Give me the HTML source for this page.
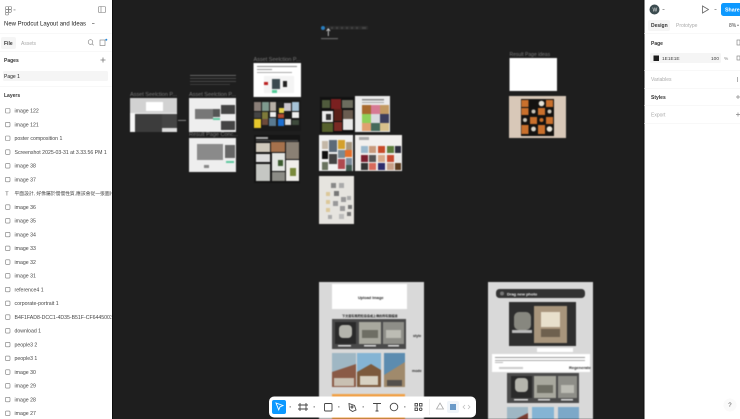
<!DOCTYPE html>
<html><head><meta charset="utf-8">
<style>
html,body{margin:0;padding:0;background:#1e1e1e;width:740px;height:419px;overflow:hidden}
svg{display:block;position:absolute;left:0;top:0}
text{font-family:"Liberation Sans","Noto Sans CJK SC",sans-serif;font-size:5.2px;fill:#333}
.l{fill:#777;font-size:5.500px}
.ic{fill:none;stroke:#777;stroke-width:.6}
.tb{fill:none;stroke:#444;stroke-width:.9}
.cv{filter:blur(.55px)}
.ui{filter:blur(.25px)}
</style></head><body>
<svg width="740" height="419" viewBox="0 0 740 419" xmlns="http://www.w3.org/2000/svg">
<defs><clipPath id="lp"><rect x="0" y="0" width="111.500" height="419"/></clipPath></defs>
<rect width="740" height="419" fill="#1e1e1e"/>

<g class="cv">
<!-- col 1 -->
<text x="130" y="96" class="l">Asset Seelction P...</text>
<rect x="130" y="98" width="47" height="34" fill="#eee"/>
<rect x="130" y="98" width="47" height="15" fill="#d2d2d2"/>
<rect x="146" y="102" width="17" height="9" fill="#fff"/>
<rect x="135" y="114" width="27" height="18" fill="#3c3c3c"/>
<rect x="162" y="114" width="15" height="14" fill="#444"/>
<rect x="130" y="113" width="5" height="19" fill="#f6f6f6"/>
<rect x="162" y="128" width="15" height="4" fill="#ddd"/>

<!-- col 2 -->
<rect x="190" y="75" width="46" height=".8" fill="#777"/>
<rect x="190" y="78" width="46" height=".8" fill="#555"/>
<rect x="190" y="81" width="46" height=".8" fill="#555"/>
<rect x="190" y="84" width="40" height=".8" fill="#444"/>
<text x="189" y="96" class="l">Asset Seelction P...</text>
<rect x="189" y="98" width="47" height="34" fill="#eee"/>
<rect x="195" y="109" width="18" height="10" fill="#777"/>
<rect x="213" y="109" width="7" height="8" fill="#555"/>
<rect x="221" y="105" width="14" height="9" fill="#444"/>
<rect x="221" y="121" width="14" height="9" fill="#444"/>
<rect x="213" y="118" width="7" height="2" fill="#5fc9a0"/>
<rect x="178" y="120" width="8" height=".8" fill="#999"/>
<text x="189" y="136" class="l">Result Page Conc...</text>
<rect x="189" y="138" width="47" height="34" fill="#eee"/>
<rect x="197" y="144" width="26" height="16" fill="#8a8a8a"/>
<rect x="225" y="145" width="10" height="13" fill="#666"/>
<rect x="226" y="161" width="8" height="2" fill="#5fc9a0"/>
<rect x="204" y="165" width="5" height="3" fill="#888"/>

<!-- col 3 -->
<text x="253.500" y="61" class="l">Asset Seelction P...</text>
<rect x="253.500" y="63" width="47.500" height="34" fill="#fff"/>
<rect x="257" y="66" width="40" height="1" fill="#888"/>
<rect x="257" y="69" width="15" height="1" fill="#999"/>
<rect x="257" y="72" width="35" height="1" fill="#aaa"/>
<rect x="264" y="76" width="30" height="17" fill="#f4f4f4"/>
<rect x="272" y="79" width="8" height="10" fill="#3c4a50"/>
<rect x="264" y="82" width="4" height="3" fill="#b22"/>
<rect x="283" y="81" width="4" height="6" fill="#222"/>
<rect x="272" y="90" width="5" height="3" fill="#5c9"/>
<!-- collage dark -->
<rect x="253" y="100" width="48" height="31" fill="#1a1a1a"/>
<rect x="254" y="102" width="7" height="9" fill="#8a7f78"/>
<rect x="262" y="102" width="7" height="9" fill="#7e9a8e"/>
<rect x="270" y="102" width="6" height="9" fill="#b8b0a6"/>
<rect x="277" y="102" width="6" height="9" fill="#222"/>
<rect x="284" y="103" width="7" height="8" fill="#c9c4cc"/>
<rect x="292" y="102" width="7" height="9" fill="#a6c3d8"/>
<rect x="279" y="108" width="5" height="5" fill="#e6d24a"/>
<rect x="254" y="112" width="7" height="6" fill="#444"/>
<rect x="262" y="112" width="6" height="7" fill="#7d7a3a"/>
<rect x="270" y="112" width="6" height="5" fill="#eee"/>
<rect x="278" y="114" width="6" height="4" fill="#b34a2f"/>
<rect x="292" y="112" width="7" height="6" fill="#eee"/>
<rect x="254" y="119" width="7" height="9" fill="#e6c72c"/>
<rect x="262" y="119" width="6" height="6" fill="#6d4a3a"/>
<rect x="269" y="118" width="7" height="8" fill="#5a7a90"/>
<rect x="278" y="119" width="6" height="7" fill="#1d6fd0"/>
<rect x="285" y="119" width="6" height="6" fill="#ddd"/>
<rect x="292" y="120" width="7" height="5" fill="#3e4a3c"/>
<!-- collage 3 -->
<rect x="254" y="135" width="46" height="48" fill="#151515"/>
<rect x="256" y="137" width="12" height="2" fill="#aaa"/>
<rect x="256" y="140" width="42" height="1.500" fill="#444"/>
<rect x="256" y="143" width="14" height="9" fill="#cfc8bb"/>
<rect x="271" y="142" width="14" height="10" fill="#a5714c"/>
<rect x="286" y="142" width="13" height="17" fill="#8a8074"/>
<rect x="256" y="154" width="14" height="8" fill="#ddd"/>
<rect x="272" y="153" width="13" height="18" fill="#e4e6e2"/>
<rect x="278" y="160" width="5" height="6" fill="#3c5c30"/>
<rect x="256" y="164" width="14" height="17" fill="#c5c7c3"/>
<rect x="272" y="172" width="13" height="9" fill="#8c8c86"/>
<rect x="286" y="160" width="13" height="21" fill="#f0eeea"/>
<rect x="290" y="168" width="6" height="8" fill="#7a8a3c"/>

<!-- top small -->
<rect x="321" y="26" width="4" height="4" rx="2" fill="#2a7fc0"/>
<rect x="326" y="26" width="42" height="3.500" fill="#2c2c2c"/>
<rect x="331" y="27" width="2" height="2" fill="#444"/><rect x="336" y="27" width="2" height="2" fill="#444"/><rect x="341" y="27" width="2" height="2" fill="#444"/><rect x="346" y="27" width="2" height="2" fill="#444"/><rect x="351" y="27" width="2" height="2" fill="#444"/><rect x="356" y="27" width="2" height="2" fill="#444"/><rect x="362" y="27" width="4" height="2" fill="#444"/>
<path d="M328.300 36V29M326.500 31l1.800-2.200 1.800 2.200" fill="none" stroke="#ddd" stroke-width=".8"/>
<rect x="321" y="38" width="17" height="1.200" fill="#666"/>

<!-- center collages -->
<rect x="320" y="97" width="34" height="36" fill="#111"/>
<rect x="322" y="100" width="8" height="8" fill="#4f5a3c"/>
<rect x="331" y="99" width="10" height="10" fill="#7a2020"/>
<rect x="342" y="100" width="11" height="8" fill="#6c6c5e"/>
<rect x="322" y="111" width="11" height="11" fill="#ececec"/>
<rect x="326" y="114" width="5" height="6" fill="#333"/>
<rect x="334" y="109" width="8" height="12" fill="#5a2018"/>
<rect x="343" y="110" width="10" height="9" fill="#6a5c50"/>
<rect x="343" y="119" width="10" height="11" fill="#e8e8e8"/>
<rect x="322" y="123" width="11" height="9" fill="#55602c"/>
<rect x="334" y="122" width="8" height="9" fill="#7a2a24"/>

<rect x="355" y="96" width="35" height="36" fill="#ececec"/>
<rect x="362" y="99" width="22" height="1.500" fill="#888"/>
<rect x="362" y="102" width="22" height="1" fill="#aaa"/>
<rect x="362" y="105" width="9" height="9" fill="#a8692e"/>
<rect x="371" y="105" width="9" height="9" fill="#d77a94"/>
<rect x="380" y="105" width="9" height="9" fill="#c39a62"/>
<rect x="362" y="114" width="9" height="9" fill="#8fcf5a"/>
<rect x="371" y="114" width="9" height="9" fill="#d9dce0"/>
<rect x="380" y="114" width="9" height="9" fill="#3c3d5c"/>
<rect x="362" y="123" width="9" height="8" fill="#e0a070"/>
<rect x="371" y="123" width="9" height="8" fill="#446a5c"/>
<rect x="380" y="123" width="9" height="8" fill="#d8c08c"/>

<rect x="319" y="135" width="34" height="36" fill="#f1f1f1"/>
<rect x="322" y="141" width="6" height="8" fill="#c4b8a8"/>
<rect x="329" y="140" width="8" height="12" fill="#5c6a78"/>
<rect x="338" y="140" width="7" height="9" fill="#d4a02c"/>
<rect x="346" y="142" width="6" height="8" fill="#a89880"/>
<rect x="322" y="151" width="6" height="8" fill="#111"/>
<rect x="329" y="154" width="8" height="10" fill="#444"/>
<rect x="338" y="150" width="7" height="8" fill="#7a8a94"/>
<rect x="345" y="150" width="7" height="7" fill="#e5702c"/>
<rect x="338" y="159" width="7" height="10" fill="#b04a50"/>
<rect x="346" y="158" width="6" height="7" fill="#7c8c9c"/>
<rect x="322" y="162" width="6" height="8" fill="#6a7460"/>
<rect x="346" y="165" width="6" height="6" fill="#425a50"/>

<rect x="355" y="135" width="47" height="36" fill="#f2f0ee"/>
<rect x="359" y="137" width="10" height="3" fill="#aaa"/>
<rect x="361" y="146" width="7" height="7" fill="#9ab8cc"/>
<rect x="369" y="146" width="7" height="7" fill="#c89a7c"/>
<rect x="378" y="146" width="7" height="7" fill="#c84a28"/>
<rect x="387" y="146" width="7" height="7" fill="#5c7c3c"/>
<rect x="395" y="146" width="6" height="7" fill="#2c2c3c"/>
<rect x="361" y="155" width="7" height="7" fill="#7c2030"/>
<rect x="369" y="155" width="7" height="7" fill="#555"/>
<rect x="378" y="155" width="7" height="7" fill="#d8a888"/>
<rect x="387" y="155" width="7" height="7" fill="#c84a30"/>
<rect x="395" y="155" width="6" height="7" fill="#e8e8e8"/>
<rect x="361" y="163" width="7" height="7" fill="#333"/>
<rect x="369" y="163" width="7" height="7" fill="#d86a5c"/>
<rect x="378" y="163" width="7" height="7" fill="#2c2c6c"/>
<rect x="387" y="163" width="7" height="7" fill="#c8a088"/>
<rect x="395" y="163" width="6" height="7" fill="#5c3c20"/>

<rect x="319" y="176" width="35" height="48" fill="#e6e4df"/>
<rect x="331" y="183" width="5" height="5" fill="#888"/><rect x="339" y="183" width="5" height="5" fill="#aaa"/>
<rect x="334" y="191" width="5" height="5" fill="#777"/><rect x="341" y="197" width="5" height="5" fill="#999"/>
<rect x="333" y="201" width="5" height="5" fill="#999"/><rect x="347" y="196" width="4" height="4" fill="#aaa"/>
<rect x="326" y="192" width="4" height="4" fill="#dcc89a"/><rect x="326" y="200" width="4" height="4" fill="#dcc89a"/>
<rect x="326" y="208" width="4" height="4" fill="#dcc89a"/><rect x="340" y="206" width="5" height="5" fill="#999"/>
<rect x="348" y="205" width="4" height="4" fill="#777"/><rect x="347" y="212" width="4" height="4" fill="#777"/>
<rect x="328" y="215" width="4" height="4" fill="#aaa"/><rect x="339" y="214" width="5" height="5" fill="#bbb"/>

<!-- result page ideas -->
<text x="509.500" y="56" style="fill:#777;font-size:5px">Result Page ideas</text>
<rect x="509.500" y="58" width="47.500" height="33" fill="#fff"/>
<rect x="509" y="96" width="57" height="42" fill="#d8c8b8"/>
<rect x="521" y="99" width="33" height="37" fill="#141210"/>
<g fill="#c9702c">
<rect x="521.500" y="100" width="7" height="7"/>
<rect x="546" y="100" width="7" height="7"/>
<rect x="521.500" y="108" width="7" height="7"/><rect x="538" y="108" width="7" height="7"/>
<rect x="530" y="117" width="7" height="7"/><rect x="546" y="117" width="7" height="7"/>
<rect x="521.500" y="125" width="7" height="9"/><rect x="538" y="125" width="7" height="9"/>
</g>
<circle cx="541.500" cy="103.500" r="2.800" fill="#e8e4d8"/>
<circle cx="533.500" cy="111.500" r="2" fill="#c9c4b8"/>
<circle cx="549.500" cy="111.500" r="2" fill="#c9c4b8"/>
<circle cx="541.500" cy="120" r="2" fill="#c9702c"/>
<circle cx="525" cy="120" r="2" fill="#c9c4b8"/>
<circle cx="533.500" cy="129" r="2.400" fill="#d8d4c8"/>
<circle cx="549.500" cy="129" r="2.800" fill="#e8e4d8"/>

<!-- big frame 1 -->
<rect x="319" y="282" width="105" height="137" fill="#d9d9d9"/>
<rect x="332" y="284" width="75" height="25" fill="#fff"/>
<text x="358" y="299" style="font-size:3.900px;font-weight:bold;fill:#222">Upload Image</text>
<text x="342" y="317" style="font-size:3.100px;font-weight:bold;fill:#222">下文選有風際館造造成上傳的所有圖檔素</text>
<rect x="332" y="319" width="74" height="30" fill="#4a4a4a"/>
<rect x="335" y="322" width="21" height="22" fill="#2a2a2a"/><rect x="339" y="325" width="13" height="13" rx="4" fill="#b5b5ad"/>
<rect x="359" y="322" width="22" height="22" fill="#a8a89e"/><rect x="362" y="330" width="16" height="8" fill="#6e6e64"/>
<rect x="383" y="322" width="21" height="22" fill="#8e8e88"/><rect x="386" y="330" width="15" height="8" fill="#bcbcb4"/>
<rect x="338" y="345" width="13" height="1.500" fill="#ddd"/><rect x="364" y="345" width="12" height="1.500" fill="#ddd"/><rect x="388" y="345" width="11" height="1.500" fill="#ddd"/>
<text x="413" y="337" style="font-size:3.600px;font-weight:bold;fill:#222">style</text>
<text x="412" y="372" style="font-size:3.600px;font-weight:bold;fill:#222">mode</text>
<rect x="332" y="353" width="24" height="34" fill="#9fb7c4"/><path d="M332 372l24-8v23h-24z" fill="#8a5a46"/><rect x="334" y="378" width="20" height="8" fill="#c9c0b2"/>
<rect x="357" y="353" width="24" height="34" fill="#84b4d4"/><path d="M357 372l14-8 10 6v17h-24z" fill="#7c5a3c"/><rect x="360" y="376" width="18" height="9" fill="#d8d2c2"/>
<rect x="384" y="353" width="21" height="34" fill="#5c8cb0"/><path d="M384 375l21-13v25h-21z" fill="#a08a6c"/><rect x="387" y="380" width="15" height="6" fill="#54504c"/>
<rect x="332" y="394" width="73" height="25" fill="#f0a24a"/>

<!-- big frame 2 -->
<rect x="488" y="282" width="105" height="137" fill="#d9d9d9"/>
<rect x="496" y="289" width="89" height="9" rx="3.500" fill="#333"/>
<circle cx="502" cy="293.500" r="2" fill="#777"/>
<text x="507" y="295.500" style="font-size:4px;font-weight:bold;fill:#eee">Drag new photo</text>
<rect x="509" y="302" width="67" height="44" fill="#2e2e2e"/>
<rect x="514" y="312" width="17" height="18" rx="5" fill="#87877f"/>
<rect x="512" y="330" width="20" height="3" fill="#bbb"/>
<rect x="534" y="306" width="33" height="37" fill="#a8957c"/>
<rect x="541" y="312" width="19" height="15" fill="#e8e0cc"/>
<rect x="541" y="329" width="19" height="8" fill="#6e604e"/>
<rect x="537" y="348" width="36" height="4" fill="#fff"/>
<rect x="492" y="354" width="98" height="18" fill="#fff"/>
<rect x="495" y="357" width="90" height="1" fill="#999"/>
<rect x="495" y="360" width="90" height="1" fill="#aaa"/>
<rect x="495" y="362" width="8" height="1" fill="#bbb"/>
<rect x="499" y="367" width="24" height="2" fill="#ccc"/>
<text x="569" y="369" style="font-size:4px;font-weight:bold;fill:#222">Regenerate</text>
<rect x="507" y="373" width="72" height="30" fill="#4a4a4a"/>
<rect x="511" y="376" width="21" height="22" fill="#2a2a2a"/><rect x="515" y="378" width="13" height="14" rx="4" fill="#b5b5ad"/>
<rect x="534" y="376" width="22" height="22" fill="#a8a89e"/><rect x="537" y="385" width="16" height="8" fill="#6e6e64"/>
<rect x="558" y="376" width="19" height="22" fill="#8e8e88"/><rect x="561" y="385" width="13" height="8" fill="#bcbcb4"/>
<rect x="514" y="399" width="14" height="1.500" fill="#ddd"/><rect x="538" y="399" width="12" height="1.500" fill="#ddd"/><rect x="561" y="399" width="12" height="1.500" fill="#ddd"/>
<rect x="507" y="407" width="21" height="12" fill="#9fb7c4"/>
<rect x="532" y="407" width="22" height="12" fill="#84b4d4"/>
<rect x="558" y="407" width="21" height="12" fill="#7ca8c8"/>
<path d="M516 419l12-6v6z" fill="#7a3c30"/>
</g>

<!-- left panel -->
<rect x="0" y="0" width="112" height="419" fill="#fff"/>
<rect x="112" y="0" width="1" height="419" fill="#0c0c0c"/>
<g class="ui" clip-path="url(#lp)">
<g class="ic"><rect x="5.500" y="6.500" width="3" height="3" rx="1"/><rect x="8.500" y="6.500" width="3" height="3" rx="1"/><rect x="5.500" y="9.500" width="3" height="3" rx="1"/><circle cx="10" cy="11" r="1.400"/><rect x="5.500" y="12.500" width="3" height="2.500" rx="1"/></g>
<rect x="13.500" y="9.500" width="2" height=".8" fill="#888"/>
<rect x="98.500" y="6.500" width="7" height="6" rx="1" class="ic"/><path d="M101 6.500v6" class="ic"/>
<text x="4" y="25.300" style="font-size:6px;fill:#222">New Prodcut Layout and Ideas</text>
<rect x="92" y="23" width="2.500" height=".8" fill="#777"/>
<rect x="0" y="33" width="112" height=".5" fill="#f0f0f0"/>
<rect x="1" y="37" width="15" height="12" rx="2" fill="#f5f5f5"/>
<text x="4" y="44.800" style="font-size:5px;font-weight:bold;fill:#333">File</text>
<text x="21" y="44.800" style="font-size:5px;fill:#aaa">Assets</text>
<circle cx="90.500" cy="42" r="2.300" class="ic"/><path d="M92.300 44l1.300 1.300" class="ic"/>
<rect x="100" y="40" width="5" height="5.500" class="ic"/><circle cx="106.300" cy="39.800" r="1" fill="#2a8ad8"/>
<rect x="0" y="51" width="112" height=".5" fill="#f0f0f0"/>
<text x="4" y="62" style="font-size:5px;fill:#333;font-weight:bold">Pages</text>
<path d="M103 57.500v5M100.500 60h5" stroke="#777" stroke-width=".8"/>
<rect x="3" y="71" width="105" height="10" rx="1.500" fill="#f5f5f5"/>
<text x="4" y="77.800" style="font-size:5px;fill:#222">Page 1</text>
<rect x="0" y="86" width="112" height=".5" fill="#f0f0f0"/>
<text x="4" y="97" style="font-size:5px;fill:#333;font-weight:bold">Layers</text>

<g class="ic">
<rect x="5.500" y="108.500" width="4.500" height="4.500" rx=".8"/><rect x="5.500" y="122.300" width="4.500" height="4.500" rx=".8"/><rect x="5.500" y="136" width="4.500" height="4.500" rx=".8"/><rect x="5.500" y="149.800" width="4.500" height="4.500" rx=".8"/><rect x="5.500" y="163.600" width="4.500" height="4.500" rx=".8"/><rect x="5.500" y="177.300" width="4.500" height="4.500" rx=".8"/>
<rect x="5.500" y="204.800" width="4.500" height="4.500" rx=".8"/><rect x="5.500" y="218.600" width="4.500" height="4.500" rx=".8"/><rect x="5.500" y="232.300" width="4.500" height="4.500" rx=".8"/><rect x="5.500" y="246.100" width="4.500" height="4.500" rx=".8"/><rect x="5.500" y="259.800" width="4.500" height="4.500" rx=".8"/><rect x="5.500" y="273.600" width="4.500" height="4.500" rx=".8"/><rect x="5.500" y="287.300" width="4.500" height="4.500" rx=".8"/><rect x="5.500" y="301.100" width="4.500" height="4.500" rx=".8"/><rect x="5.500" y="314.800" width="4.500" height="4.500" rx=".8"/><rect x="5.500" y="328.600" width="4.500" height="4.500" rx=".8"/><rect x="5.500" y="342.300" width="4.500" height="4.500" rx=".8"/><rect x="5.500" y="356.100" width="4.500" height="4.500" rx=".8"/><rect x="5.500" y="369.800" width="4.500" height="4.500" rx=".8"/><rect x="5.500" y="383.600" width="4.500" height="4.500" rx=".8"/><rect x="5.500" y="397.300" width="4.500" height="4.500" rx=".8"/><rect x="5.500" y="411.100" width="4.500" height="4.500" rx=".8"/>
</g>
<text x="5.300" y="195.500" style="font-size:5.500px;fill:#555">T</text>
<text x="14.500" y="112.500" style="fill:#444">image 122</text>
<text x="14.500" y="126.300" style="fill:#444">image 121</text>
<text x="14.500" y="140" style="fill:#444">poster composition 1</text>
<text x="14.500" y="153.800" style="fill:#444">Screenshot 2025-03-31 at 3.33.56 PM 1</text>
<text x="14.500" y="167.600" style="fill:#444">image 38</text>
<text x="14.500" y="181.300" style="fill:#444">image 37</text>
<text x="14.500" y="195" style="fill:#444;font-size:4.800px">平面設計, 好像屬於慢慢性質,應該會從一張圖片</text>
<text x="14.500" y="208.800" style="fill:#444">image 36</text>
<text x="14.500" y="222.600" style="fill:#444">image 35</text>
<text x="14.500" y="236.300" style="fill:#444">image 34</text>
<text x="14.500" y="250.100" style="fill:#444">image 33</text>
<text x="14.500" y="263.800" style="fill:#444">image 32</text>
<text x="14.500" y="277.600" style="fill:#444">image 31</text>
<text x="14.500" y="291.300" style="fill:#444">reference4 1</text>
<text x="14.500" y="305.100" style="fill:#444">corporate-portrait 1</text>
<text x="14.500" y="318.800" style="fill:#444">B4F1FAD8-DCC1-4D35-B51F-CF64450035</text>
<text x="14.500" y="332.600" style="fill:#444">download 1</text>
<text x="14.500" y="346.300" style="fill:#444">people3 2</text>
<text x="14.500" y="360.100" style="fill:#444">people3 1</text>
<text x="14.500" y="373.800" style="fill:#444">image 30</text>
<text x="14.500" y="387.600" style="fill:#444">image 29</text>
<text x="14.500" y="401.300" style="fill:#444">image 28</text>
<text x="14.500" y="415.100" style="fill:#444">image 27</text>
</g>

<!-- right panel -->
<rect x="644" y="0" width="96" height="419" fill="#fff"/>
<rect x="643.500" y="0" width="1" height="419" fill="#0c0c0c"/>
<g class="ui">
<circle cx="654.500" cy="9.500" r="5" fill="#3c4c50"/>
<text x="652.500" y="11.500" style="font-size:5px;fill:#eee">W</text>
<rect x="662.500" y="9" width="2" height=".8" fill="#888"/>
<path d="M702.500 6v7l6-3.500z" fill="none" stroke="#666" stroke-width=".8"/>
<rect x="714.500" y="9" width="2" height=".8" fill="#888"/>
<rect x="721" y="3" width="22" height="13" rx="2.500" fill="#0d99ff"/>
<text x="725" y="11.500" style="font-size:5.300px;font-weight:bold;fill:#fff">Share</text>
<rect x="648" y="20" width="22" height="11" rx="2" fill="#f5f5f5"/>
<text x="651" y="27" style="font-size:5px;font-weight:bold;fill:#333">Design</text>
<text x="676" y="27" style="font-size:5px;fill:#aaa">Prototype</text>
<text x="729" y="27" style="font-size:5px;fill:#444">8%</text>
<rect x="737" y="24.800" width="2" height=".8" fill="#666"/>
<rect x="644" y="33.500" width="96" height=".5" fill="#f0f0f0"/>
<text x="651" y="45" style="font-size:5px;font-weight:bold;fill:#333">Page</text>
<rect x="737" y="40" width="3" height="5" class="ic"/>
<rect x="650" y="53" width="71" height="10" rx="1.500" fill="#f5f5f5"/>
<rect x="653.500" y="55.500" width="5.500" height="5.500" fill="#1e1e1e"/>
<text x="662" y="60" style="font-size:4.800px;fill:#444">1E1E1E</text>
<text x="711" y="60" style="font-size:4.800px;fill:#444">100</text>
<text x="724" y="60" style="font-size:4.800px;fill:#888">%</text>
<rect x="737" y="56" width="3" height="4" class="ic"/>
<rect x="644" y="70" width="96" height=".5" fill="#f0f0f0"/>
<text x="651" y="81" style="font-size:5px;fill:#aaa">Variables</text>
<rect x="737" y="77" width=".8" height="5" fill="#999"/>
<rect x="644" y="88" width="96" height=".5" fill="#f0f0f0"/>
<text x="651" y="99" style="font-size:5px;font-weight:bold;fill:#333">Styles</text>
<path d="M736 97h4M738 95v4" stroke="#888" stroke-width=".7"/>
<rect x="644" y="105" width="96" height=".5" fill="#f0f0f0"/>
<text x="651" y="116.500" style="font-size:5px;fill:#aaa">Export</text>
<path d="M736 114.500h4M738 112.500v4" stroke="#888" stroke-width=".7"/>
<rect x="644" y="123" width="96" height=".5" fill="#f0f0f0"/>
<circle cx="730" cy="405" r="6.500" fill="#fafafa"/>
<text x="728.300" y="407" style="font-size:6px;fill:#555">?</text>
</g>

<!-- toolbar -->
<g class="ui">
<rect x="269" y="396.500" width="207" height="21" rx="5" fill="#fff"/>
<rect x="272" y="400" width="14" height="14" rx="2" fill="#0d99ff"/>
<path d="M276 403l7 2.500-3 1.300-1.300 3z" fill="none" stroke="#fff" stroke-width=".9"/>
<rect x="289.500" y="406.500" width="1.500" height=".8" fill="#555"/>
<path d="M300 403v8M306 403v8M298 405h10M298 409h10" class="tb"/>
<rect x="313.500" y="406.500" width="1.500" height=".8" fill="#555"/>
<rect x="324.500" y="403.500" width="7.500" height="7.500" rx="1" class="tb"/>
<rect x="338" y="406.500" width="1.500" height=".8" fill="#555"/>
<path d="M349 403.500l5.500 2 1.500 4.500-3.500 1.500-3-2z" class="tb"/><circle cx="352" cy="407" r="1" class="tb"/>
<rect x="362.500" y="406.500" width="1.500" height=".8" fill="#555"/>
<path d="M373.500 404v-.5h7v.5M377 403.500V411M375.500 411h3" class="tb"/>
<circle cx="394" cy="407" r="3.800" class="tb"/>
<rect x="404" y="406.500" width="1.500" height=".8" fill="#555"/>
<g class="tb"><rect x="415" y="403.500" width="2.500" height="2.500"/><rect x="419.500" y="403.500" width="2.500" height="2.500"/><rect x="415" y="408" width="2.500" height="2.500"/><circle cx="420.700" cy="409.200" r="1.300"/></g>
<rect x="429" y="399" width=".7" height="16" fill="#e8e8e8"/>
<path d="M440 403l3.500 6h-7z" fill="none" stroke="#aaa" stroke-width=".8"/>
<rect x="447" y="401" width="12" height="12" rx="2" fill="#f0f5fa"/>
<rect x="450" y="404" width="6" height="6" fill="#6a9ac8"/>
<path d="M465 405l-2 2 2 2M468 405l2 2-2 2" fill="none" stroke="#bbb" stroke-width=".7"/>
</g>
</svg>
</body></html>
